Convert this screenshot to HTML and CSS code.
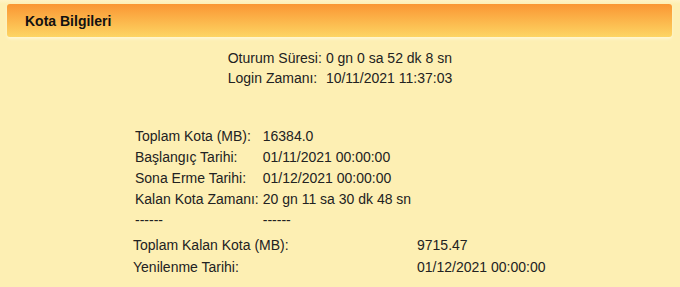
FILE: index.html
```html
<!DOCTYPE html>
<html lang="tr">
	<head>
		<meta charset="UTF-8" />
		<meta name="viewport" content="width=device-width, initial-scale=1.0" />
		<title>Kota Bilgileri</title>
		<link rel="stylesheet" href="styles.css">
	</head>
	<body>
		<div id="container">
			<div class="panel-header">Kota Bilgileri</div>

			<table class="info-table session-table">
				<tr>
					<td>Oturum Süresi:</td>
					<td>0 gn 0 sa 52 dk 8 sn</td>
				</tr>
				<tr>
					<td>Login Zamanı:</td>
					<td>10/11/2021 11:37:03</td>
				</tr>
			</table>

			<div id="quota-wrap">
				<table class="info-table quota-table">
					<tr>
						<td>Toplam Kota (MB):</td>
						<td>16384.0</td>
					</tr>
					<tr>
						<td>Başlangıç Tarihi:</td>
						<td>01/11/2021 00:00:00</td>
					</tr>
					<tr>
						<td>Sona Erme Tarihi:</td>
						<td>01/12/2021 00:00:00</td>
					</tr>
					<tr>
						<td>Kalan Kota Zamanı:</td>
						<td>20 gn 11 sa 30 dk 48 sn</td>
					</tr>
					<tr>
						<td>------</td>
						<td>------</td>
					</tr>
				</table>

				<table class="info-table remain-table">
					<tr>
						<td class="remain-label">Toplam Kalan Kota (MB):</td>
						<td>9715.47</td>
					</tr>
					<tr>
						<td class="remain-label">Yenilenme Tarihi:</td>
						<td>01/12/2021 00:00:00</td>
					</tr>
				</table>
			</div>
		</div>
	</body>
</html>
```

FILE: styles.css
```css
:root {
	--main-text-color: #222;
	--main-bg-color: #fdefb3;
	--header-top-color: #fa9633;
	--header-bottom-color: #fdd563;
}
body {
	font-family: "Liberation Sans", Arial, sans-serif;
	font-size: 14px;
	margin: 0;
	padding: 0;
	color: var(--main-text-color);
	background-color: var(--main-bg-color);
}
#container {
	padding-top: 4px;
	border-top: 0;
	background: linear-gradient(#fff3c6 0, #fdefb3 4px);
	min-height: 287px;
	box-sizing: border-box;
}
.panel-header {
	margin: 0 8px 0 7px;
	height: 33px;
	line-height: 33px;
	padding-left: 18px;
	padding-top: 1px;
	box-sizing: border-box;
	font-weight: bold;
	font-size: 14px;
	color: #111;
	border-radius: 3px;
	background: linear-gradient(var(--header-top-color), var(--header-bottom-color));
	box-shadow: 0 2px 3px rgba(255, 248, 214, 0.9);
}
.info-table {
	border-collapse: collapse;
	border-spacing: 0;
}
.info-table td {
	padding: 2px;
	white-space: nowrap;
	vertical-align: top;
}
.session-table {
	margin: 11px auto 0;
}
.session-table td {
	line-height: 16px;
}
#quota-wrap {
	width: 418px;
	margin: 38px auto 0;
}
.quota-table {
	margin-left: 2px;
}
.quota-table td {
	line-height: 17px;
}
.remain-table {
	width: 100%;
	margin-top: 3px;
}
.remain-table td {
	line-height: 18px;
}
.remain-label {
	width: 280px;
}
```
